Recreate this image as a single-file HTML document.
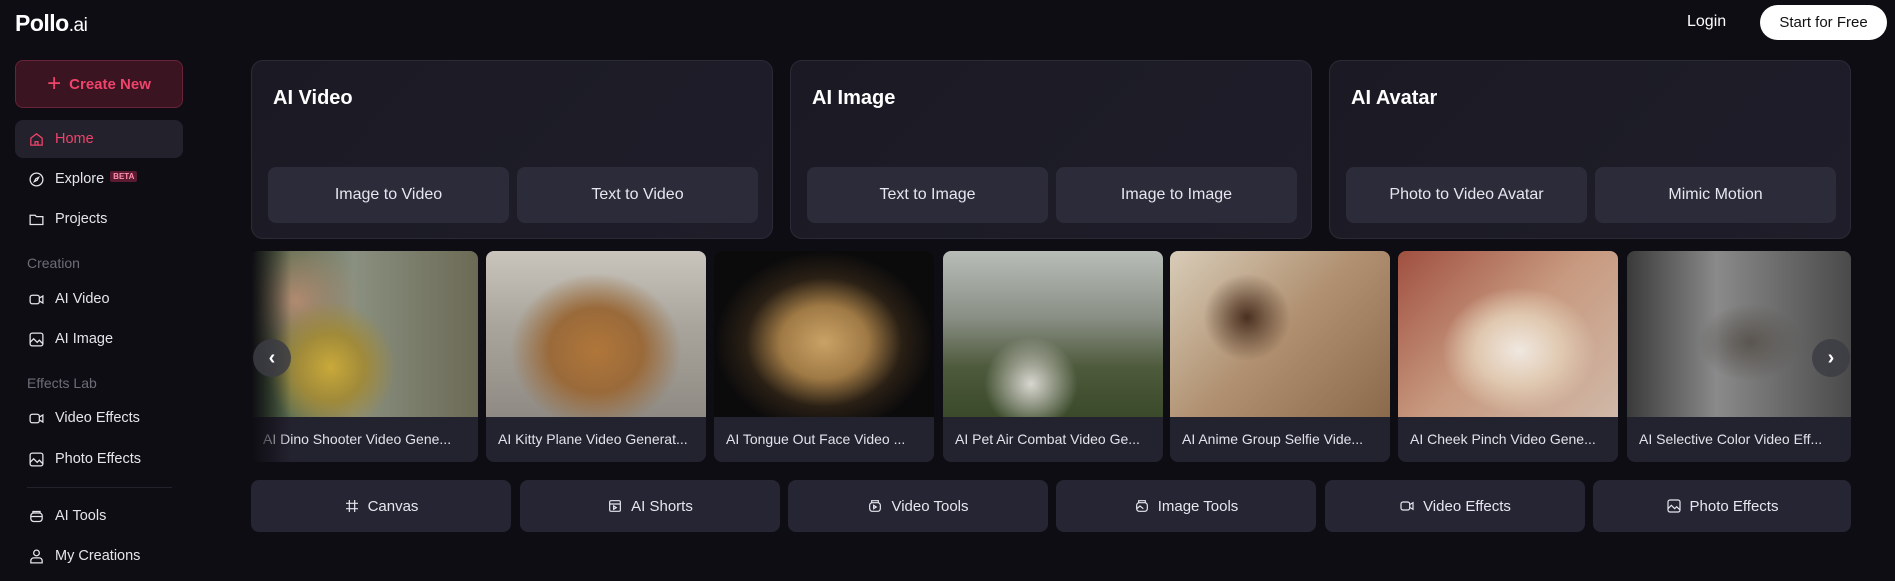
<!DOCTYPE html>
<html><head><meta charset="utf-8"><style>
*{margin:0;padding:0;box-sizing:border-box}
body{width:1895px;height:581px;background:#0e0d13;font-family:"Liberation Sans",sans-serif;color:#e8e8ee;position:relative;overflow:hidden}
.abs{position:absolute}
.logo{left:15px;top:10px;font-size:23px;font-weight:bold;color:#fff;letter-spacing:-0.5px}
.logo span{font-weight:normal;font-size:19px}
.login{left:1687px;top:13px;font-size:16px;color:#fff}
.start{left:1760px;top:5px;width:127px;height:35px;border-radius:18px;background:#fff;color:#111;font-size:15px;display:flex;align-items:center;justify-content:center}
.create{left:15px;top:60px;width:168px;height:48px;border-radius:8px;background:#3a1420;border:1px solid #6a2236;color:#f0436b;font-size:15px;font-weight:bold;display:flex;align-items:center;justify-content:center;gap:8px}
.home{left:15px;top:120px;width:168px;height:38px;border-radius:8px;background:#22212c}
.nav{left:28px;font-size:14.5px;color:#e4e4ea;display:flex;align-items:center;gap:10px;height:20px}
.nav svg{width:17px;height:17px;stroke:currentColor;fill:none;stroke-width:1.8}
.sec{left:27px;font-size:14px;color:#6d6c78}
.beta{font-size:8px;font-weight:bold;background:#5a1a30;color:#ff8fb0;padding:1px 3px;border-radius:2px;margin-left:-4px;margin-top:-6px}
.panel{top:60px;width:522px;height:179px;border-radius:12px;background:linear-gradient(135deg,#1b1a24,#1e1d29);border:1px solid #2b2a37}
.panel h2{position:absolute;left:21px;top:26px;font-size:20px;font-weight:bold;color:#fff}
.pb{position:absolute;top:106px;width:241px;height:56px;border-radius:8px;background:#2c2b39;font-size:16px;color:#e6e6ee;display:flex;align-items:center;justify-content:center}
.card{top:251px;width:220px;height:211px;border-radius:8px;overflow:hidden;background:#23222f}
.card .img{height:166px}
.card .cap{height:45px;font-size:14px;color:#e2e2ea;padding:14px 12px;white-space:nowrap;overflow:hidden}
.arrow{width:38px;height:38px;border-radius:50%;background:rgba(60,60,68,.85);top:339px;color:#fff;font-size:20px;display:flex;align-items:center;justify-content:center;font-weight:bold}
.bb{top:480px;width:260px;height:52px;border-radius:8px;background:#262533;font-size:15px;color:#e6e6ee;display:flex;align-items:center;justify-content:center;gap:8px}
.bb svg{width:16px;height:16px;stroke:currentColor;fill:none;stroke-width:1.8}
</style></head><body>
<div class="abs logo">Pollo<span>.ai</span></div>
<div class="abs login">Login</div>
<div class="abs start">Start for Free</div>

<div class="abs create"><span style="font-size:24px;font-weight:normal">+</span>Create New</div>
<div class="abs home"></div>
<div class="abs nav" style="top:129px;color:#f0436b"><svg viewBox="0 0 24 24"><path d="M4 10l8-6 8 6v10H4z"/><path d="M10 20v-5h4v5"/></svg>Home</div>
<div class="abs nav" style="top:169px"><svg viewBox="0 0 24 24"><circle cx="12" cy="12" r="9"/><path d="M15 9l-2 4-4 2 2-4z"/></svg>Explore <span class="beta">BETA</span></div>
<div class="abs nav" style="top:209px"><svg viewBox="0 0 24 24"><path d="M3 6h7l2 2h9v11H3z"/></svg>Projects</div>
<div class="abs sec" style="top:255px">Creation</div>
<div class="abs nav" style="top:289px"><svg viewBox="0 0 24 24"><rect x="3" y="6" width="13" height="12" rx="3"/><path d="M16 10l5-3v10l-5-3"/></svg>AI Video</div>
<div class="abs nav" style="top:329px"><svg viewBox="0 0 24 24"><rect x="3" y="3" width="18" height="18" rx="3"/><path d="M3 16l5-5 5 5 3-3 5 5"/></svg>AI Image</div>
<div class="abs sec" style="top:375px">Effects Lab</div>
<div class="abs nav" style="top:408px"><svg viewBox="0 0 24 24"><rect x="3" y="6" width="13" height="12" rx="3"/><path d="M16 10l5-3v10l-5-3"/></svg>Video Effects</div>
<div class="abs nav" style="top:449px"><svg viewBox="0 0 24 24"><rect x="3" y="3" width="18" height="18" rx="3"/><path d="M3 16l5-5 5 5 3-3 5 5"/></svg>Photo Effects</div>
<div class="abs" style="left:27px;top:487px;width:145px;height:1px;background:#23222c"></div>
<div class="abs nav" style="top:506px"><svg viewBox="0 0 24 24"><rect x="4" y="7" width="16" height="12" rx="4"/><path d="M4 12h16M7 7V5h10v2"/></svg>AI Tools</div>
<div class="abs nav" style="top:546px"><svg viewBox="0 0 24 24"><circle cx="12" cy="7" r="4"/><path d="M4 21v-3a4 4 0 014-4h8a4 4 0 014 4v3z"/></svg>My Creations</div>

<div class="abs panel" style="left:251px"><h2>AI Video</h2><div class="pb" style="left:16px">Image to Video</div><div class="pb" style="left:265px">Text to Video</div></div>
<div class="abs panel" style="left:790px"><h2>AI Image</h2><div class="pb" style="left:16px">Text to Image</div><div class="pb" style="left:265px">Image to Image</div></div>
<div class="abs panel" style="left:1329px"><h2>AI Avatar</h2><div class="pb" style="left:16px">Photo to Video Avatar</div><div class="pb" style="left:265px">Mimic Motion</div></div>

<div class="abs card" style="left:251px;width:227px"><div class="img" style="background:radial-gradient(circle at 35% 70%,#c9a93a 0,#a08a3a 18%,transparent 35%),radial-gradient(circle at 20% 30%,#b08a70 0,transparent 30%),linear-gradient(90deg,#3f5a35,#8a9080 45%,#6b6a55)"></div><div class="cap">AI Dino Shooter Video Gene...</div></div>
<div class="abs" style="left:251px;top:251px;width:40px;height:211px;background:linear-gradient(90deg,#0e0d13,rgba(14,13,19,0))"></div>
<div class="abs card" style="left:486px"><div class="img" style="background:radial-gradient(ellipse at 50% 60%,#b0763a 0,#9a6a3a 30%,transparent 55%),linear-gradient(180deg,#c9c5bd,#a9a59c 45%,#8f8a83)"></div><div class="cap">AI Kitty Plane Video Generat...</div></div>
<div class="abs card" style="left:714px"><div class="img" style="background:radial-gradient(ellipse at 50% 55%,#c9a266 0,#a07a45 28%,#2a2015 50%,#0c0b0c 70%)"></div><div class="cap">AI Tongue Out Face Video ...</div></div>
<div class="abs card" style="left:943px"><div class="img" style="background:radial-gradient(ellipse at 40% 80%,#d8d6d0 0,transparent 25%),linear-gradient(180deg,#b8bdb8,#8a8f85 40%,#4e5a3c 70%,#3a4a2a)"></div><div class="cap">AI Pet Air Combat Video Ge...</div></div>
<div class="abs card" style="left:1170px"><div class="img" style="background:radial-gradient(circle at 35% 40%,#4a3020 0,transparent 25%),linear-gradient(135deg,#d8ccb8,#b09070 50%,#8a6a4a)"></div><div class="cap">AI Anime Group Selfie Vide...</div></div>
<div class="abs card" style="left:1398px"><div class="img" style="background:radial-gradient(ellipse at 55% 60%,#f0e8e0 0,#e0c8b0 25%,transparent 45%),linear-gradient(135deg,#a05040,#c89a80 50%,#d0b8a8)"></div><div class="cap">AI Cheek Pinch Video Gene...</div></div>
<div class="abs card" style="left:1627px;width:224px"><div class="img" style="background:radial-gradient(ellipse at 55% 55%,#5a5550 0,transparent 30%),linear-gradient(90deg,#3a3a3a,#8a8a8a 40%,#6a6a6a 70%,#4a4a4a)"></div><div class="cap">AI Selective Color Video Eff...</div></div>
<div class="abs arrow" style="left:253px">‹</div>
<div class="abs arrow" style="left:1812px">›</div>

<div class="abs bb" style="left:251px"><svg viewBox="0 0 24 24"><path d="M8 3v18M16 3v18M3 8h18M3 16h18"/></svg>Canvas</div>
<div class="abs bb" style="left:520px"><svg viewBox="0 0 24 24"><rect x="4" y="4" width="16" height="16" rx="2"/><path d="M4 9h16M10 12v5l4-2.5z"/></svg>AI Shorts</div>
<div class="abs bb" style="left:788px"><svg viewBox="0 0 24 24"><rect x="4" y="7" width="16" height="13" rx="4"/><path d="M7 7V4h10v3M10 11v5l4-2.5z"/></svg>Video Tools</div>
<div class="abs bb" style="left:1056px"><svg viewBox="0 0 24 24"><rect x="4" y="7" width="16" height="13" rx="4"/><path d="M7 7V4h10v3M4 16l5-4 5 4"/></svg>Image Tools</div>
<div class="abs bb" style="left:1325px"><svg viewBox="0 0 24 24"><rect x="3" y="6" width="13" height="12" rx="3"/><path d="M16 10l5-3v10l-5-3"/></svg>Video Effects</div>
<div class="abs bb" style="left:1593px;width:258px"><svg viewBox="0 0 24 24"><rect x="3" y="3" width="18" height="18" rx="3"/><path d="M3 16l5-5 5 5 3-3 5 5"/></svg>Photo Effects</div>
</body></html>
